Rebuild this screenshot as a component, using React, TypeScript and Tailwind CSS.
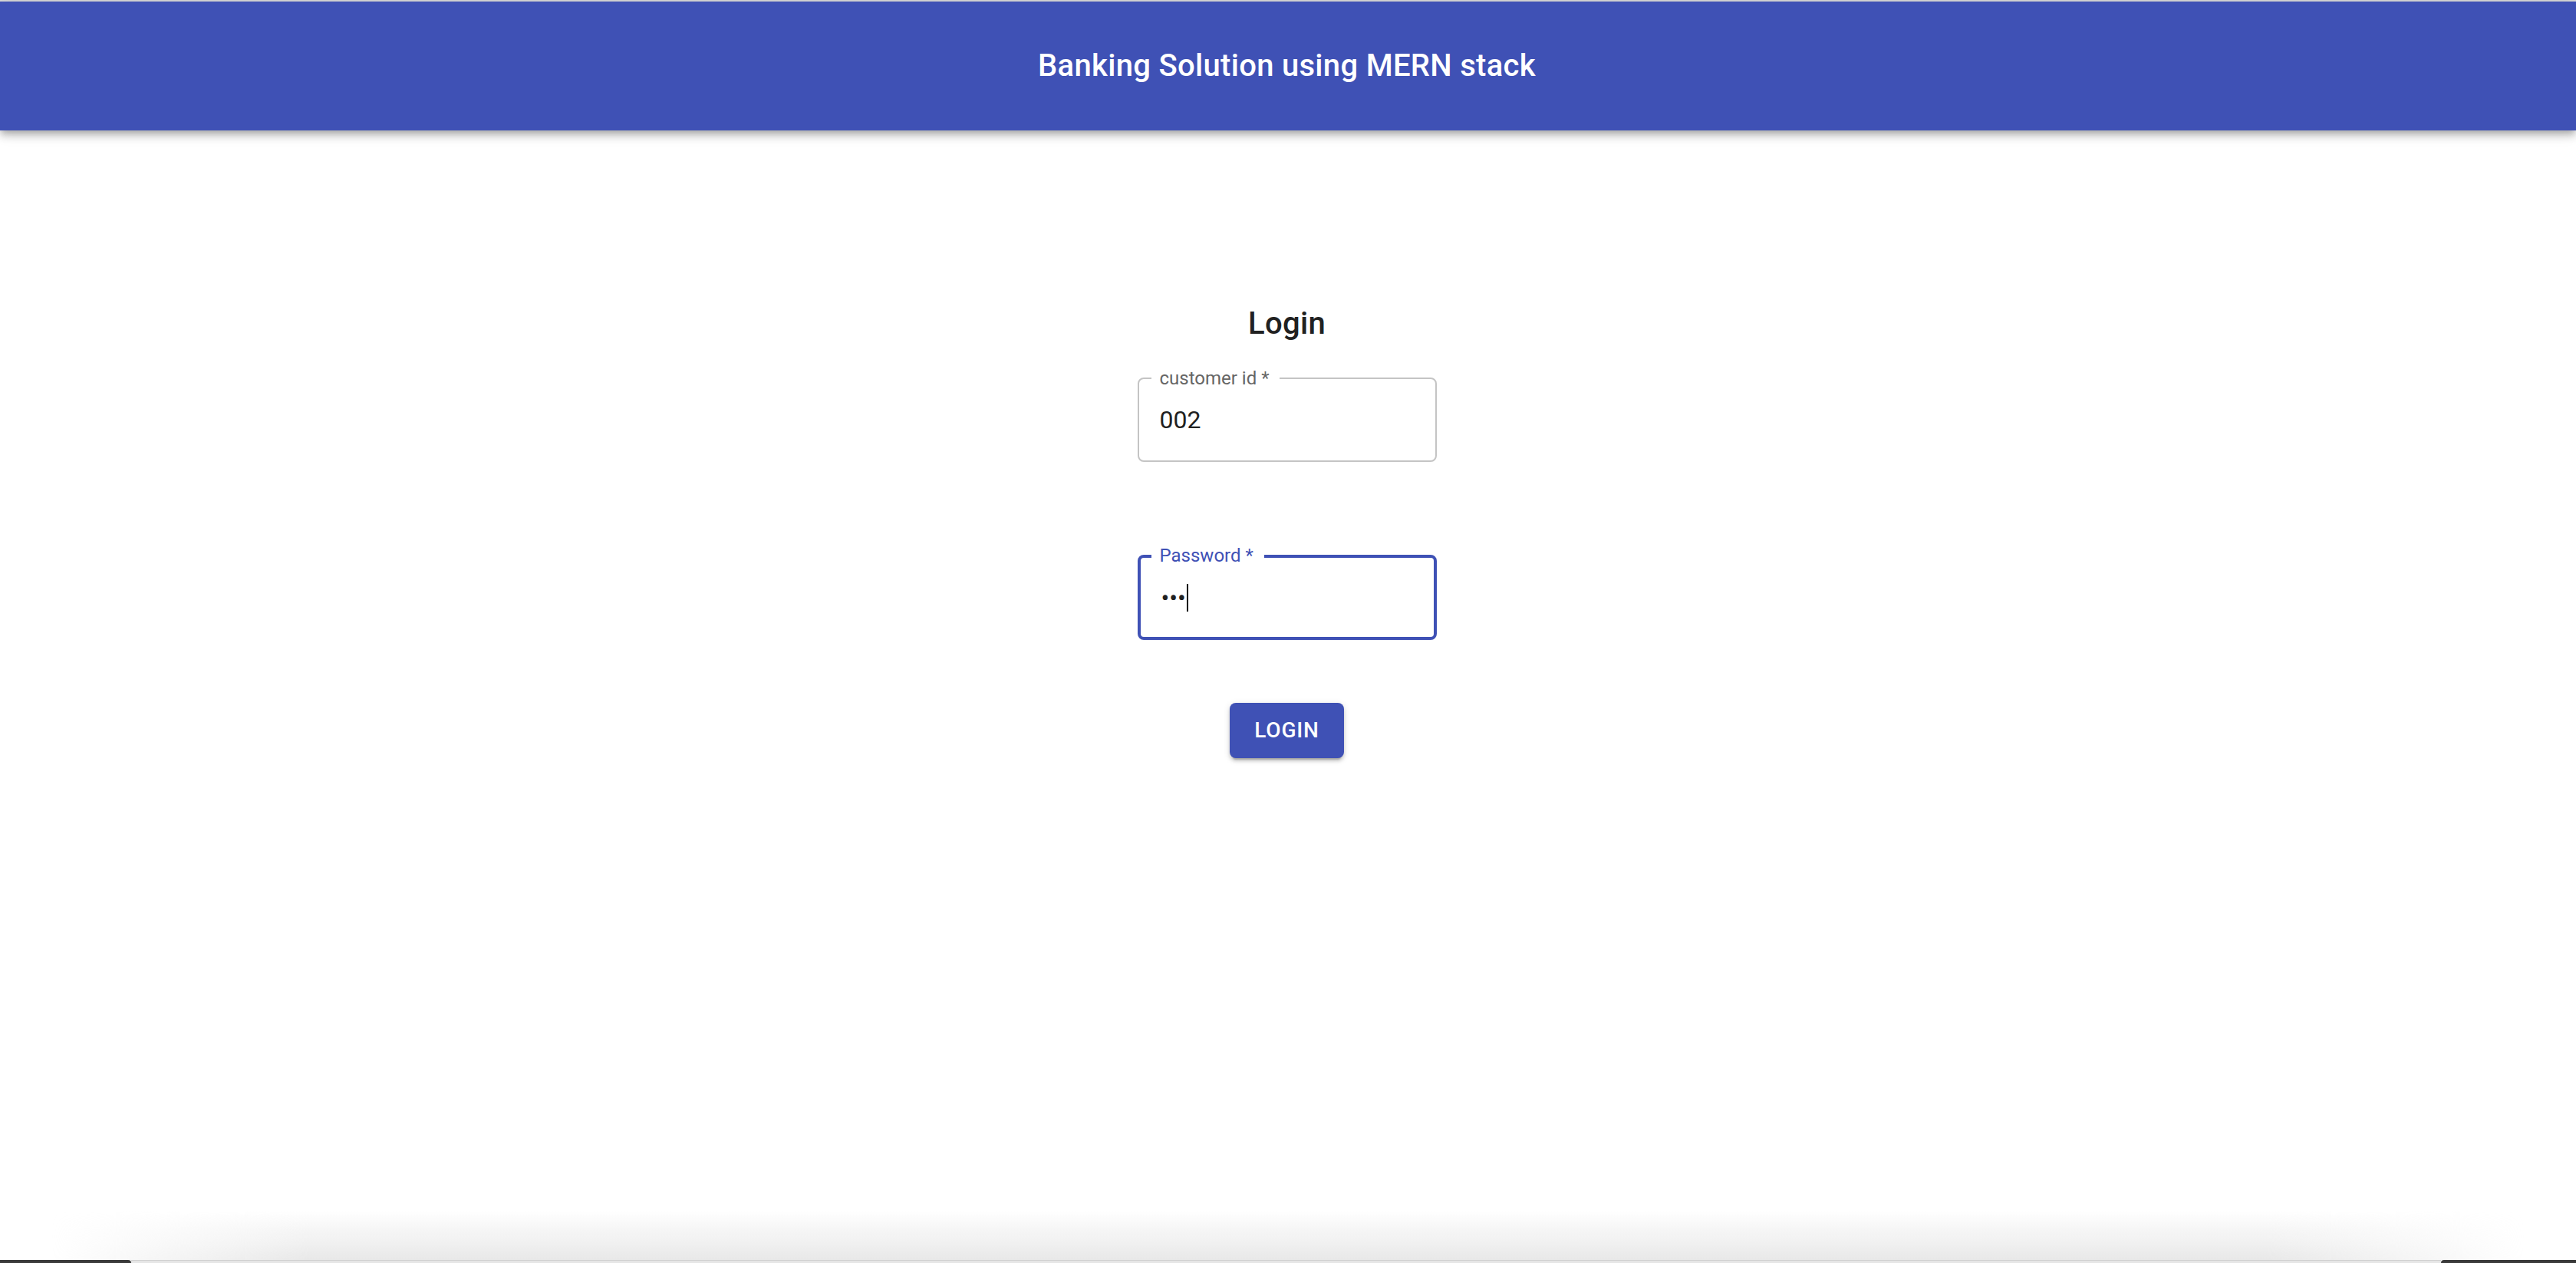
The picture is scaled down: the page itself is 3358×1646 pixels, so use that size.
import React, { useState } from 'react';

const font = { fontFamily: 'Roboto, "Helvetica Neue", Arial, sans-serif' };

const OutlinedField = ({
  label,
  focused,
  children,
}: {
  label: string;
  focused?: boolean;
  children: React.ReactNode;
}) => {
  return (
    <div
      className={
        focused
          ? 'relative flex items-center w-[390px] h-[111px] rounded-[8px] border-4 border-[#3f51b5] pl-[27px]'
          : 'relative flex items-center w-[390px] h-[110px] rounded-[8px] border-2 border-[#c4c4c4] pl-[27px]'
      }
    >
      <span
        className={
          focused
            ? 'absolute top-[-15px] left-[14px] bg-white pl-[11px] pr-[14px] text-[24px] leading-[24px] text-[#3f51b5]'
            : 'absolute top-[-13px] left-[16px] bg-white pl-[11px] pr-[13px] text-[24px] leading-[24px] text-[#666666]'
        }
      >
        {label}
      </span>
      {children}
    </div>
  );
};

const App = () => {
  const [customerId] = useState('002');

  return (
    <div className="flex flex-col w-full h-[1646px] overflow-hidden bg-white" style={font}>
      <div className="h-[2px] bg-[#dcdcdc]" />

      {/* App bar */}
      <header className="relative z-10 flex items-center justify-center h-[168px] bg-[#3f51b5] shadow-[0_4px_8px_-2px_rgba(0,0,0,0.2),0_8px_10px_0_rgba(0,0,0,0.14),0_2px_20px_0_rgba(0,0,0,0.12)]">
        <h1 className="text-[40px] font-medium tracking-[0.3px] text-white leading-[64px] mr-[3px]">
          Banking Solution using MERN stack
        </h1>
      </header>

      {/* Login form */}
      <main className="flex-1 flex flex-col items-center pt-[220px] pr-[3px]">
        <h2 className="text-[40px] font-medium leading-[64px] text-[#212121] tracking-[0.3px]">Login</h2>

        <div className="mt-[38px]">
          <OutlinedField label="customer id *">
            <span className="text-[32px] leading-[46px] text-[#212121]">{customerId}</span>
          </OutlinedField>
        </div>

        <div className="mt-[121px]">
          <OutlinedField label="Password *" focused>
            <span className="text-[32px] leading-[46px] text-[#212121]">•••</span>
            <span className="ml-[1px] w-[2px] h-[36px] bg-black" />
          </OutlinedField>
        </div>

        <button className="mt-[82px] h-[72px] px-[32px] rounded-[8px] bg-[#3f51b5] text-white text-[28px] font-medium uppercase tracking-[0.8px] shadow-[0_6px_2px_-4px_rgba(0,0,0,0.2),0_4px_4px_0_rgba(0,0,0,0.14),0_2px_10px_0_rgba(0,0,0,0.12)]">
          Login
        </button>
      </main>

      {/* window edge at the bottom of the screenshot */}
      <div className="h-[64px] bg-[linear-gradient(to_bottom,rgba(230,230,230,0),#e8e8e8)] [mask-image:linear-gradient(to_right,transparent_2%,black_12%,black_88%,transparent_98%)]" />
      <div className="flex h-[4px]">
        <div className="w-[171px] bg-[#3a3a3a] rounded-tr-[4px]" />
        <div className="flex-1 bg-[#e6e6e6] border-t border-[#cfcfcf]" />
        <div className="w-[176px] bg-[#3a3a3a] rounded-tl-[4px]" />
      </div>
    </div>
  );
};

export default App;
